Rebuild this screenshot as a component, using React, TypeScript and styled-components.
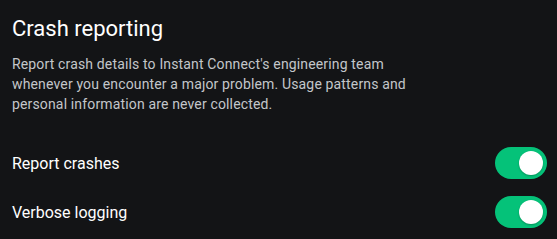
import { createGlobalStyle } from 'styled-components';
import styled from 'styled-components';

const GlobalStyle = createGlobalStyle`
  html, body {
    margin: 0;
    padding: 0;
    background: #131416;
  }
  body {
    font-family: Roboto, "Liberation Sans", sans-serif;
    -webkit-font-smoothing: antialiased;
  }
`;

const Panel = styled.section`
  width: 557px;
  height: 239px;
  box-sizing: border-box;
  padding: 15px 10px 0 12px;
  background: #131416;
  display: flex;
  flex-direction: column;
`;

const Title = styled.h2`
  margin: 0;
  font-size: 22px;
  font-weight: 400;
  line-height: 28px;
  color: #ffffff;
`;

const Description = styled.p`
  margin: 11px 0 0;
  width: 420px;
  font-size: 14px;
  letter-spacing: 0.15px;
  line-height: 20px;
  color: #c3c6ca;
`;

const Options = styled.div`
  display: flex;
  flex-direction: column;
  gap: 17px;
  margin-top: 33px;
`;

const Row = styled.label`
  display: flex;
  align-items: center;
  justify-content: space-between;
  height: 32px;
`;

const Label = styled.span`
  font-size: 16px;
  color: #ffffff;
`;

const Track = styled.span<{ $on: boolean }>`
  position: relative;
  display: inline-block;
  width: 52px;
  height: 32px;
  border-radius: 16px;
  background: ${(p) => (p.$on ? '#05c279' : '#4a4d52')};
`;

const Knob = styled.span<{ $on: boolean }>`
  position: absolute;
  top: 4px;
  left: ${(p) => (p.$on ? '24px' : '4px')};
  width: 24px;
  height: 24px;
  border-radius: 50%;
  background: #ffffff;
  box-shadow: 0 1px 2px rgba(0, 0, 0, 0.25);
`;

const Toggle = ({ on }: { on: boolean }) => (
  <Track $on={on}>
    <Knob $on={on} />
  </Track>
);

export default function App() {
  return (
    <>
      <GlobalStyle />
      <Panel>
        <Title>Crash reporting</Title>
        <Description>
          Report crash details to Instant Connect's engineering team whenever you
          encounter a major problem. Usage patterns and personal information are
          never collected.
        </Description>
        <Options>
          <Row>
            <Label>Report crashes</Label>
            <Toggle on />
          </Row>
          <Row>
            <Label>Verbose logging</Label>
            <Toggle on />
          </Row>
        </Options>
      </Panel>
    </>
  );
}
